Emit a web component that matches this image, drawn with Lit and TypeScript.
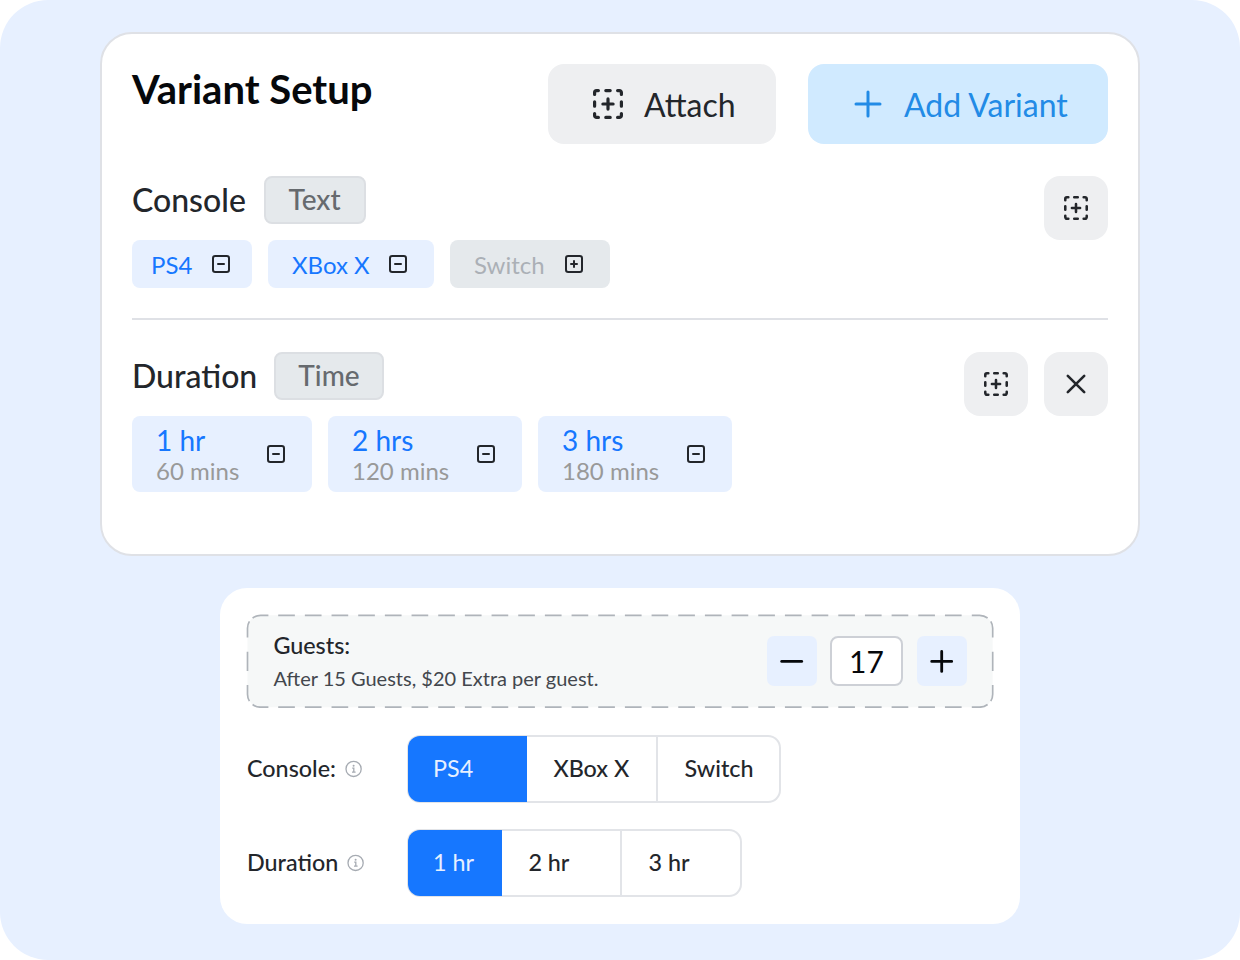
import { LitElement, html, svg, css } from "lit";
import { customElement } from "lit/decorators.js";

const attachIcon = (size: number) => html`
  <svg class="ico" width=${size} height=${size} viewBox="0 0 20 20" fill="none" stroke="currentColor" stroke-width="1.6" stroke-linecap="round" stroke-linejoin="round">
    <path d="M3.3 5.2V4.3A1 1 0 0 1 4.3 3.3H5.2M14.8 3.3H15.7A1 1 0 0 1 16.7 4.3V5.2M16.7 14.8V15.7A1 1 0 0 1 15.7 16.7H14.8M5.2 16.7H4.3A1 1 0 0 1 3.3 15.7V14.8"/>
    <path d="M8.9 3.3H11.1M8.9 16.7H11.1M3.3 8.9V11.1M16.7 8.9V11.1M7.45 10H12.55M10 7.45V12.55"/>
  </svg>`;

const boxIcon = (plus: boolean) => html`
  <svg class="ico" width="24" height="24" viewBox="0 0 24 24" fill="none" stroke="#23262b" stroke-width="2" stroke-linecap="round">
    <rect x="4" y="4" width="16" height="16" rx="2.2"/>
    <path d="M9 12H15"/>${plus ? svg`<path d="M12 9V15"/>` : null}
  </svg>`;

const infoIcon = html`
  <svg class="ico" width="18" height="18" viewBox="0 0 18 18" fill="none" stroke="#a6abb2" stroke-width="1.3">
    <circle cx="8.6" cy="8.9" r="7.6"/>
    <path d="M7.2 8.1H8.8V12.1M7 12.2H10.6"/><circle cx="8.6" cy="5.7" r="1" fill="#a6abb2" stroke="none"/>
  </svg>`;

@customElement("app-root")
export class AppRoot extends LitElement {
  static styles = css`
    :host { display: block; width: 1240px; height: 960px; background: #fff; font-family: Lato, sans-serif; color: #23262b; }
    * { box-sizing: border-box; }
    .ico { display: block; flex: none; }
    .page { height: 960px; padding-top: 32px; background: #e7f0ff; border-radius: 48px; display: flex; flex-direction: column; align-items: center; gap: 32px; }
    .setup { width: 1040px; height: 524px; padding: 30px; background: #fff; border: 2px solid #dfe1e6; border-radius: 32px; }
    .head { display: flex; height: 80px; gap: 32px; }
    .title { flex: 1; margin: 0; font-size: 40px; line-height: 50px; font-weight: 700; color: #06080b; white-space: nowrap; }
    .btn { display: flex; align-items: center; gap: 16px; height: 80px; padding: 0 0 0 40px; border-radius: 16px; font-size: 32px; line-height: 40px; white-space: nowrap; background: #eeeff1; }
    .btn span { padding-top: 2px; }
    .attach { width: 228px; }
    .add { width: 300px; background: #d0eaff; color: #228be6; }
    .row { display: flex; justify-content: space-between; margin-top: 32px; }
    .label { display: flex; height: 48px; font-size: 32px; line-height: 48px; font-weight: 500; white-space: nowrap; }
    .name { width: 132px; }
    .duration .name { width: 142px; }
    .tag { width: 102px; height: 48px; padding-right: 1px; text-align: center; border: 2px solid #dcdfe3; border-radius: 8px; background: #e5e9ec; color: #666a6e; font-size: 28px; line-height: 43px; }
    .duration .tag { width: 110px; padding-right: 0; }
    .chips { display: flex; gap: 16px; margin-top: 16px; }
    .chip { display: flex; align-items: center; justify-content: space-between; height: 48px; border-radius: 8px; background: #e7f0ff; color: #1677ff; font-size: 24px; line-height: 46px; padding: 0 19px; white-space: nowrap; }
    .chip span { padding-top: 2px; }
    .chip.tall { height: 76px; padding: 0 24px; }
    .chip.off { background: #e5e9ec; color: #abb0b6; }
    .big { font-size: 28px; line-height: 32px; padding-top: 2px; }
    .small { font-size: 24px; line-height: 30px; color: #999; }
    .tools { display: flex; gap: 16px; }
    .tool { width: 64px; height: 64px; border-radius: 16px; background: #eeeff1; display: grid; place-items: center; }
    .rule { height: 2px; margin-top: 30px; background: #dfe1e6; }
    .booking { width: 800px; height: 336px; border-radius: 27px; background: #fff; padding: 26px 26px 0; }
    .guests { display: grid; height: 94px; width: 748px; }
    .guests > * { grid-area: 1 / 1; }
    .guest-row { display: flex; align-items: flex-start; padding: 22px 27px 0 27.4px; }
    .guest-text { flex: 1; }
    .g1 { font-size: 23.33px; line-height: 18px; font-weight: 500; }
    .g2 { font-size: 20px; line-height: 24px; margin-top: 12px; color: #43474d; }
    .step { width: 50px; height: 50px; border-radius: 7px; background: #e7f0ff; display: grid; place-items: center; }
    .count { width: 73px; height: 50px; margin: 0 14px 0 13px; border: 2px solid #cdd0d6; border-radius: 8px; background: #fff; text-align: center; font-size: 30px; line-height: 46px; color: #06080b; }
    .option { display: flex; height: 67px; margin-top: 27px; }
    .option + .option { margin-top: 27.4px; }
    .option-label { display: flex; align-items: center; gap: 9px; width: 161px; height: 67px; padding-left: 1px; font-size: 23.33px; line-height: 26px; font-weight: 500; white-space: nowrap; }
    .option-label span { padding-bottom: 1px; }
    .segments { display: flex; height: 67.5px; padding: 1px; border-radius: 13px; background: #e2e4e8; overflow: hidden; }
    .seg { padding-left: 26px; margin: 1px 0 1px 2px; font-size: 23.33px; line-height: 63px; font-weight: 500; background: #fff; white-space: nowrap; }
    .seg.first { margin: 0; padding-left: 25px; line-height: 65px; border-radius: 12px 0 0 12px; background: #1677ff; color: #e7f0ff; font-weight: 400; }
    .seg.second { margin-left: 0; padding-left: 26.4px; }
    .seg:last-child { margin-right: 1px; border-radius: 0 11px 11px 0; padding-left: 26.5px; }
  `;

  segment(items: [string, number][]) {
    return html`<div class="segments">${items.map(([t, w], i) => html`
      <div class="seg ${i === 0 ? "first" : i === 1 ? "second" : ""}" style="width:${w}px">${t}</div>`)}</div>`;
  }

  render() {
    return html`<div class="page">
      <section class="setup">
        <div class="head">
          <h1 class="title">Variant Setup</h1>
          <div class="btn attach">${attachIcon(40)}<span>Attach</span></div>
          <div class="btn add">
            <svg class="ico" width="40" height="40" viewBox="0 0 40 40" stroke="currentColor" stroke-width="3" stroke-linecap="round"><path d="M8 20H32M20 8V32"/></svg>
            <span>Add Variant</span>
          </div>
        </div>
        <div class="row">
          <div>
            <div class="label"><span class="name">Console</span><span class="tag">Text</span></div>
            <div class="chips">
              <div class="chip" style="width:120px"><span>PS4</span>${boxIcon(false)}</div>
              <div class="chip" style="width:166px;padding-left:24px;padding-right:24px"><span>XBox X</span>${boxIcon(false)}</div>
              <div class="chip off" style="width:160px;padding-left:24px;padding-right:24px"><span>Switch</span>${boxIcon(true)}</div>
            </div>
          </div>
          <div class="tools"><div class="tool">${attachIcon(32)}</div></div>
        </div>
        <div class="rule"></div>
        <div class="row duration">
          <div>
            <div class="label"><span class="name">Duration</span><span class="tag">Time</span></div>
            <div class="chips">
              ${([["1 hr", "60 mins", 180], ["2 hrs", "120 mins", 194], ["3 hrs", "180 mins", 194]] as [string, string, number][]).map(([a, b, w]) => html`
                <div class="chip tall" style="width:${w}px"><div><div class="big">${a}</div><div class="small">${b}</div></div>${boxIcon(false)}</div>`)}
            </div>
          </div>
          <div class="tools">
            <div class="tool">${attachIcon(32)}</div>
            <div class="tool"><svg class="ico" width="32" height="32" viewBox="0 0 32 32" stroke="currentColor" stroke-width="2.6" stroke-linecap="round"><path d="M7.8 7.8L24.2 24.2M24.2 7.8L7.8 24.2"/></svg></div>
          </div>
        </div>
      </section>
      <section class="booking">
        <div class="guests">
          <svg class="ico" width="748" height="94" viewBox="0 0 748 94" fill="none" stroke="#afb4ba" stroke-width="1.67">
            <rect x="1.5" y="1.3" width="745.2" height="92" rx="13.3" fill="#f6f8f8" stroke="none"/>
            <path d="M32.2 1.3H720M32.2 93.2H720" stroke-dasharray="16.67 10"/>
            <path d="M6.6 4A13.3 13.3 0 0 1 14.8 1.3H22.4M725.8 1.3H733.4A13.3 13.3 0 0 1 741.6 4M6.6 90.5A13.3 13.3 0 0 0 14.8 93.2H22.4M725.8 93.2H733.4A13.3 13.3 0 0 0 741.6 90.5"/>
            <path d="M3.4 7.4A13.3 13.3 0 0 0 1.5 14.6V23.5M1.5 37.7V57M1.5 71V79.9A13.3 13.3 0 0 0 3.4 87.1M744.8 7.4A13.3 13.3 0 0 1 746.7 14.6V23.5M746.7 37.7V57M746.7 71V79.9A13.3 13.3 0 0 1 744.8 87.1"/>
          </svg>
          <div class="guest-row">
            <div class="guest-text"><div class="g1">Guests:</div><div class="g2">After 15 Guests, $20 Extra per guest.</div></div>
            <div class="step"><svg class="ico" width="26" height="26" viewBox="0 0 26 26" stroke="#06080b" stroke-width="2.8" stroke-linecap="round"><path d="M2.7 13.4H22.7"/></svg></div>
            <div class="count">17</div>
            <div class="step"><svg class="ico" width="26" height="26" viewBox="0 0 26 26" stroke="#06080b" stroke-width="2.8" stroke-linecap="round"><path d="M2.7 13.4H22.7M12.7 3.4V23.4"/></svg></div>
          </div>
        </div>
        <div class="option"><div class="option-label"><span>Console:</span> ${infoIcon}</div>${this.segment([["PS4", 119], ["XBox X", 129], ["Switch", 121.3]])}</div>
        <div class="option"><div class="option-label"><span>Duration</span> ${infoIcon}</div>${this.segment([["1 hr", 94], ["2 hr", 118], ["3 hr", 118]])}</div>
      </section>
    </div>`;
  }
}
